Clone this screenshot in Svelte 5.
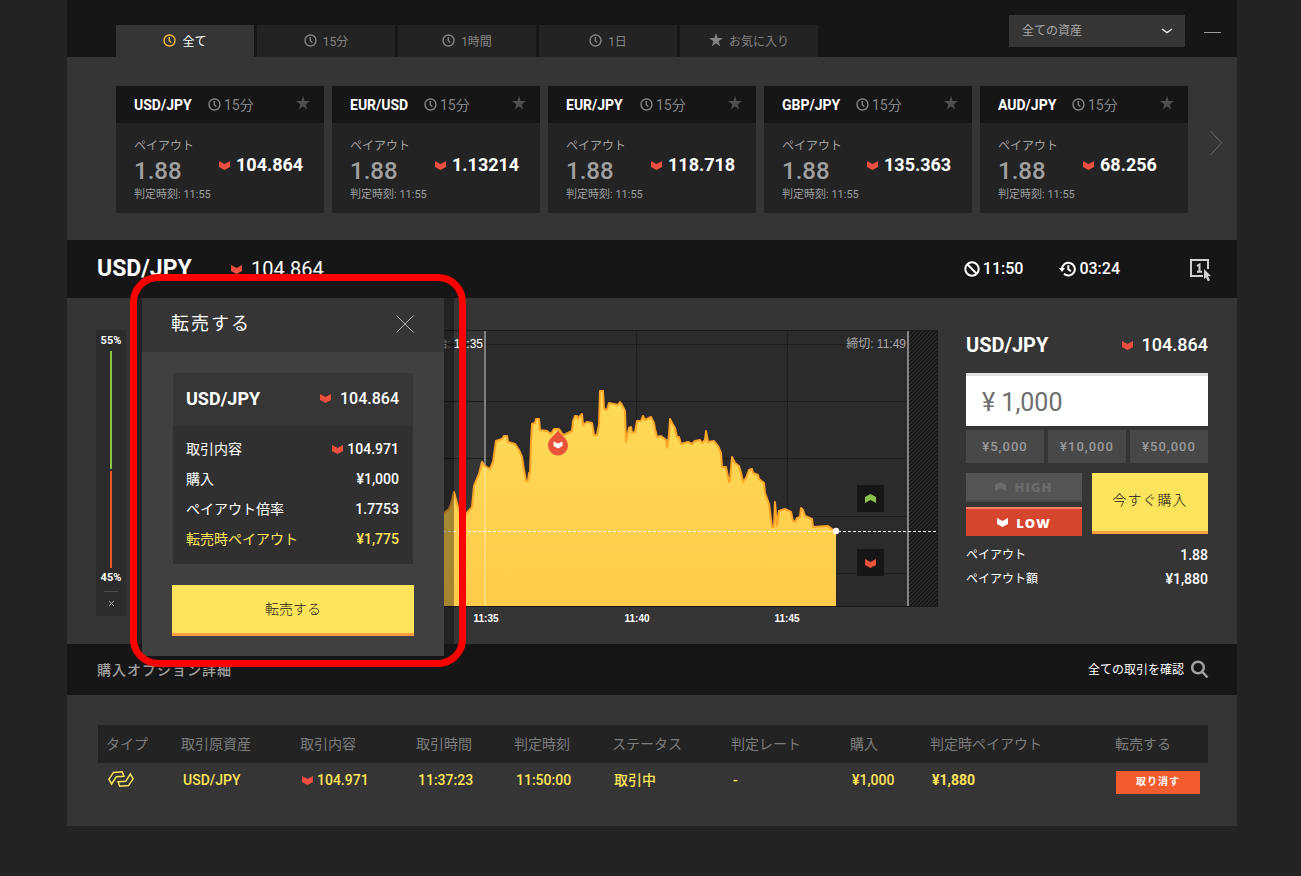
<script lang="ts">
    const tabs = [
        { label: "全て", icon: "clock" },
        { label: "15分", icon: "clock" },
        { label: "1時間", icon: "clock" },
        { label: "1日", icon: "clock" },
        { label: "お気に入り", icon: "star" },
    ];
    let activeTab = $state(0);

    const assets = [
        { pair: "USD/JPY", rate: "104.864" },
        { pair: "EUR/USD", rate: "1.13214" },
        { pair: "EUR/JPY", rate: "118.718" },
        { pair: "GBP/JPY", rate: "135.363" },
        { pair: "AUD/JPY", rate: "68.256" },
    ];

    const amounts = ["¥5,000", "¥10,000", "¥50,000"];
    let amount = $state("¥ 1,000");

    const columns = [
        { label: "タイプ", width: 75 },
        { label: "取引原資産", width: 119 },
        { label: "取引内容", width: 116 },
        { label: "取引時間", width: 98 },
        { label: "判定時刻", width: 98 },
        { label: "ステータス", width: 119 },
        { label: "判定レート", width: 119 },
        { label: "購入", width: 80 },
        { label: "判定時ペイアウト", width: 185 },
        { label: "転売する", width: 101 },
    ];

    // Rate history in chart units (800 x 300), oldest tick first.
    const ticks =
        "12,230 60,222 120,226 180,205 250,196 306,183 311,179 313,174 316,162 320,177 323,185 328,184 334,177 336,156 341,144 " +
        "344,132 347,136 352,139 355,132 358,111 364,109 366,106 369,106 370,112 377,114 381,120 " +
        "384,127 386,140 388,151 390,151 391,143 392,144 393,113 394,94 397,93 398,89 401,89 " +
        "402,100 409,101 413,104 416,99 421,99 425,105 428,104 434,101 435,91 437,86 439,86 " +
        "440,89 442,86 444,84 445,95 449,92 454,93 456,105 459,105 461,95 462,61 465,61 466,79 " +
        "469,80 471,73 480,75 482,72 484,75 487,81 488,112 491,98 493,97 494,103 497,102 499,91 " +
        "503,91 505,86 507,90 513,87 516,93 517,99 519,107 523,106 528,110 529,118 531,105 532,89 " +
        "534,93 537,98 539,107 541,107 543,114 550,112 554,114 557,111 562,110 564,113 567,110 568,101 " +
        "570,112 576,111 580,116 583,123 584,137 588,137 591,152 592,151 594,127 597,133 601,136 " +
        "603,143 605,152 608,148 611,140 614,139 615,143 620,145 621,149 626,153 627,163 631,174 " +
        "634,197 636,197 637,172 639,196 641,181 647,179 653,182 655,191 657,192 659,188 662,187 " +
        "663,178 665,180 667,186 674,189 675,197 690,196 695,200 698,201";
</script>

{#snippet clock()}
    <svg class="clock" width="13" height="13" viewBox="0 0 13 13" aria-hidden="true">
        <circle cx="6.5" cy="6.5" r="5.5" />
        <path d="M6.3 3v3.8l2 1.8" />
    </svg>
{/snippet}

{#snippet star()}
    <svg class="star" width="14" height="14" viewBox="0 0 14 14" aria-hidden="true">
        <path d="M7 0l1.6 5H14L9.6 8.2 11.3 13.5 7 10.3 2.7 13.5 4.4 8.2 0 5h5.4z" />
    </svg>
{/snippet}

{#snippet low()}
    <svg class="low" width="11" height="9" viewBox="0 0 11 9" aria-hidden="true">
        <path d="M0 0l5.5 3L11 0v6L5.5 9 0 6z" />
    </svg>
{/snippet}

<main>
    <header class="topbar">
        <nav class="tabs">
            {#each tabs as tab, i}
                <button class="tab" class:active={i === activeTab} onclick={() => (activeTab = i)}>
                    {#if tab.icon === "star"}{@render star()}{:else}{@render clock()}{/if}
                    <span>{tab.label}</span>
                </button>
            {/each}
        </nav>
        <div class="select">
            <select aria-label="全ての資産">
                <option>全ての資産</option>
            </select>
            <svg width="12" height="6" viewBox="0 0 12 6" aria-hidden="true">
                <path d="M1 1l5 3.6L11 1" />
            </svg>
        </div>
        <button class="collapse" aria-label="−"></button>
    </header>

    <section class="assets">
        <div class="cards">
            {#each assets as asset}
                <article class="card">
                    <div class="card-head">
                        <strong>{asset.pair}</strong>
                        {@render clock()}
                        <span>15分</span>
                        {@render star()}
                    </div>
                    <div class="card-body">
                        <div>
                            <div class="payout-label">ペイアウト</div>
                            <div class="payout">1.88</div>
                            <div class="expiry">判定時刻: 11:55</div>
                        </div>
                        <div class="rate">{@render low()}{asset.rate}</div>
                    </div>
                </article>
            {/each}
        </div>
        <button class="next" aria-label="›">
            <svg width="14" height="26" viewBox="0 0 14 26" aria-hidden="true">
                <path d="M1.5 1l11 12-11 12" />
            </svg>
        </button>
    </section>

    <section class="instrument">
        <h1>USD/JPY</h1>
        <div class="current">{@render low()}104.864</div>
        <div class="time">
            <svg width="16" height="16" viewBox="0 0 16 16" aria-hidden="true">
                <circle cx="8" cy="8" r="6.7" />
                <path d="M3.3 3.3l9.4 9.4" />
            </svg>
            11:50
        </div>
        <div class="time">
            <svg width="17" height="16" viewBox="0 0 17 16" aria-hidden="true">
                <path d="M3 8a6.4 6.4 0 1 1 2 4.8M9.3 4.2v4l2.6 2" />
                <path class="solid" d="M0 7h6L3 11z" />
            </svg>
            03:24
        </div>
        <button class="oneclick" aria-label="1">
            <svg width="22" height="24" viewBox="0 0 22 24" aria-hidden="true">
                <path class="frame" d="M18 11V2H1v16h12" />
                <path class="one" d="M7 8l2.5-1.5V14M7 13.7h5" />
                <path class="pointer" d="M14 11l7 7-3 .3 2 4-2.2 1-1.8-4-2 2z" />
            </svg>
        </button>
    </section>

    <section class="trade">
        <aside class="gauge">
            <span>55%</span>
            <i class="up"></i>
            <i class="down"></i>
            <span>45%</span>
            <button aria-label="×">
                <svg width="7" height="7" viewBox="0 0 7 7" aria-hidden="true">
                    <path d="M1 1l5 5M6 1L1 6" />
                </svg>
            </button>
        </aside>

        <svg class="chart" viewBox="0 0 800 300">
            <defs>
                <linearGradient id="area" x1="0" y1="0" x2="0" y2="1">
                    <stop offset="0" stop-color="#fedb58" />
                    <stop offset="1" stop-color="#fecb4a" />
                </linearGradient>
                <pattern id="hatch" width="4" height="4" patternUnits="userSpaceOnUse">
                    <rect width="4" height="4" fill="#303030" />
                    <path d="M-1 1l2-2M0 4l4-4M3 5l2-2" stroke="#141414" stroke-width="1.6" />
                </pattern>
            </defs>
            <rect x="10" width="337" height="276" fill="#363636" />
            <rect x="347" width="453" height="276" fill="#2b2b2b" />
            <rect x="771" width="29" height="276" fill="url(#hatch)" />
            <path class="grid" d="M10 14.5h760M10 71.5h760M10 128.5h760M10 186.5h760M10 243.5h760M498.5 0v276M649.5 0v276" />
            <path class="edge" d="M10 .5h790M10 276.5h790M799.5 0v276" />
            <path d="M347 1v275" stroke="#7f7f7f" stroke-width="2" />
            <polygon points={`12,276 ${ticks} 698,276`} fill="url(#area)" />
            <polyline points={ticks} fill="none" stroke="#ffa629" stroke-width="2" stroke-linejoin="round" />
            <path d="M347 137v139" stroke="#fff" stroke-opacity=".25" stroke-width="2" />
            <path d="M770 1v275" stroke="#858585" stroke-width="2" />
            <path d="M10 201.5h790" stroke="#fff" stroke-dasharray="3 2" />
            <circle cx="698" cy="201" r="3.2" fill="#fff" />

            <text class="mark" x="345" y="18" text-anchor="end">開始: <tspan class="now">11:35</tspan></text>
            <text class="mark" x="768" y="18" text-anchor="end">締切: 11:49</text>

            <path d="M420 100c2 5 10 8 10 15.5a10 10 0 0 1-20 0c0-7.5 8-10.5 10-15.5z" fill="#e95338" />
            <path d="M415.5 111.5l4.5 2 4.5-2v4.5l-4.5 2.5-4.5-2.5z" fill="#fff" />

            <rect x="719" y="155" width="27" height="27" fill="#161616" />
            <path d="M727 167l5.5-3 5.5 3v6l-5.5-3-5.5 3z" fill="#8bc34a" />
            <rect x="719" y="219" width="27" height="27" fill="#161616" />
            <path d="M727 229l5.5 3 5.5-3v6l-5.5 3-5.5-3z" fill="#f0533c" />

            <g class="axis" text-anchor="middle">
                <text x="348" y="292">11:35</text>
                <text x="499" y="292">11:40</text>
                <text x="649" y="292">11:45</text>
            </g>
        </svg>

        <form class="order" onsubmit={(e) => e.preventDefault()}>
            <div class="order-head">
                <h2>USD/JPY</h2>
                <span class="rate">{@render low()}104.864</span>
            </div>
            <input type="text" aria-label="購入" bind:value={amount} />
            <div class="amounts">
                {#each amounts as value}
                    <button type="button" onclick={() => (amount = value.replace("¥", "¥ "))}>{value}</button>
                {/each}
            </div>
            <div class="actions">
                <div class="direction">
                    <button type="button" class="high-btn">
                        <svg width="11" height="9" viewBox="0 0 11 9" aria-hidden="true">
                            <path d="M0 3l5.5-3L11 3v6L5.5 6 0 9z" />
                        </svg>
                        HIGH
                    </button>
                    <button type="button" class="low-btn">{@render low()} LOW</button>
                </div>
                <button class="buy">今すぐ購入</button>
            </div>
            <dl>
                <div><dt>ペイアウト</dt><dd>1.88</dd></div>
                <div><dt>ペイアウト額</dt><dd>¥1,880</dd></div>
            </dl>
        </form>

        <div class="dim"></div>
        <div class="modal" role="dialog" aria-labelledby="resell-title">
            <div class="modal-head">
                <h2 id="resell-title">転売する</h2>
                <button aria-label="×">
                    <svg width="18" height="18" viewBox="0 0 18 18" aria-hidden="true">
                        <path d="M.5.5l17 17M17.5.5l-17 17" />
                    </svg>
                </button>
            </div>
            <div class="modal-body">
                <div class="ticket">
                    <div class="ticket-head">
                        <h3>USD/JPY</h3>
                        <span class="rate">{@render low()}104.864</span>
                    </div>
                    <dl>
                        <div><dt>取引内容</dt><dd>{@render low()}104.971</dd></div>
                        <div><dt>購入</dt><dd>¥1,000</dd></div>
                        <div><dt>ペイアウト倍率</dt><dd>1.7753</dd></div>
                        <div class="accent"><dt>転売時ペイアウト</dt><dd>¥1,775</dd></div>
                    </dl>
                </div>
                <button class="sell">転売する</button>
            </div>
        </div>
        <div class="highlight"></div>
    </section>

    <section class="history-head">
        <h2>購入オプション詳細</h2>
        <a href="#history">
            全ての取引を確認
            <svg width="18" height="19" viewBox="0 0 18 19" aria-hidden="true">
                <circle cx="7" cy="7.5" r="5.8" />
                <path d="M11.5 12l5 5.5" />
            </svg>
        </a>
    </section>

    <section class="history" id="history">
        <table>
            <colgroup>
                {#each columns as column}
                    <col style={`width:${column.width}px`} />
                {/each}
            </colgroup>
            <thead>
                <tr>
                    {#each columns as column}<th>{column.label}</th>{/each}
                </tr>
            </thead>
            <tbody>
                <tr>
                    <td>
                        <svg class="type" width="26" height="16" viewBox="0 0 26 16" aria-hidden="true">
                            <path d="M3.7 13L.9 8.2 5.5 1.4l8.8-.6 1.6 4.4-7.6.5z" />
                            <path d="M22.3 3l2.8 4.800-4.600 6.800-8.800.6-1.600-4.400 7.600-.5z" />
                        </svg>
                    </td>
                    <td>USD/JPY</td>
                    <td>{@render low()}104.971</td>
                    <td>11:37:23</td>
                    <td>11:50:00</td>
                    <td>取引中</td>
                    <td>-</td>
                    <td>¥1,000</td>
                    <td><b>¥1,880</b></td>
                    <td><button class="cancel">取り消す</button></td>
                </tr>
            </tbody>
        </table>
    </section>
</main>

<style>
    :global(body) {
        background: #232323;
    }
    main {
        margin: 0 64px 50px 67px;
        background: #353535;
        color: #fff;
        font-family: Roboto, "Noto Sans CJK JP", sans-serif;
        font-size: 14px;
        line-height: 20px;
    }
    button,
    input,
    select {
        font: inherit;
        color: inherit;
        border: 0;
        border-radius: 0;
        padding: 0;
        margin: 0;
        background: none;
        box-sizing: border-box;
    }
    button {
        cursor: pointer;
    }
    h1,
    h2,
    h3,
    dl,
    dd {
        margin: 0;
    }
    svg {
        flex: none;
        fill: none;
    }
    .clock {
        stroke: currentColor;
        stroke-width: 1.4;
    }
    .star {
        fill: currentColor;
    }
    .low {
        fill: #f04e3e;
    }

    .topbar {
        display: flex;
        align-items: flex-end;
        height: 57px;
        padding: 0 16px 0 49px;
        background: #161616;
    }
    .tabs {
        display: flex;
        gap: 3px;
        flex: 1;
    }
    .tab {
        display: flex;
        align-items: center;
        justify-content: center;
        gap: 6px;
        width: 138px;
        height: 32px;
        background: #232323;
        color: #848484;
        font-size: 12px;
    }
    .tab span {
        padding-top: 2px;
    }
    .tab svg {
        margin-bottom: 2px;
    }
    .tab.active {
        background: #353535;
        color: #fff;
    }
    .tab.active .clock {
        stroke: #f5bd41;
    }
    .select {
        display: flex;
        align-items: center;
        align-self: flex-start;
        position: relative;
        width: 176px;
        height: 32px;
        margin-top: 15px;
        background: #353535;
        color: #a8a8a8;
        font-size: 12px;
    }
    .select select {
        appearance: none;
        width: 100%;
        height: 100%;
        padding: 0 13px;
    }
    .select svg {
        position: absolute;
        right: 12px;
        stroke: #e8e8e8;
        stroke-width: 1.5;
        pointer-events: none;
    }
    .collapse {
        align-self: center;
        width: 17px;
        height: 9px;
        margin-left: 19px;
        border-bottom: 1px solid #9a9a9a;
    }

    .assets {
        display: flex;
        align-items: center;
        padding: 29px 14px 27px 49px;
    }
    .cards {
        display: flex;
        flex: 1;
        gap: 8px;
    }
    .card {
        flex: 1;
        background: #232323;
    }
    .card-head {
        display: flex;
        align-items: center;
        height: 37px;
        padding: 0 14px 0 18px;
        background: #161616;
        color: #848484;
    }
    .card-head strong {
        color: #fff;
        font-weight: 700;
        flex: 0 0 74px;
    }
    .card-head span {
        margin-left: 3px;
        flex: 1;
    }
    .card-head .star {
        margin-bottom: 3px;
        color: #505050;
    }
    .card-body {
        display: flex;
        align-items: flex-start;
        justify-content: space-between;
        height: 90px;
        padding: 13px 21px 0 18px;
        box-sizing: border-box;
        color: #a0a0a0;
    }
    .payout-label {
        font-size: 12px;
    }
    .payout {
        font-size: 24px;
        font-weight: 500;
        line-height: 30px;
    }
    .expiry {
        font-size: 11px;
        line-height: 18px;
    }
    .rate {
        display: flex;
        align-items: center;
        color: #fff;
        font-size: 18px;
        font-weight: 500;
    }
    .card .rate {
        width: 84px;
        gap: 6px;
        padding-top: 19px;
        font-weight: 700;
    }
    .next {
        margin: 0 0 13px 21px;
    }
    .next svg {
        display: block;
        stroke: #6b6b6b;
    }

    .instrument {
        display: flex;
        align-items: center;
        height: 58px;
        padding: 0 25px 0 30px;
        background: #161616;
    }
    h1 {
        width: 134px;
        font-size: 23px;
        font-weight: 700;
    }
    .current {
        display: flex;
        align-items: center;
        gap: 9px;
        flex: 1;
        font-size: 20px;
    }
    .time {
        display: flex;
        align-items: center;
        gap: 3px;
        margin-right: 36px;
        font-size: 16px;
        font-weight: 500;
    }
    .time svg {
        stroke: #fff;
        stroke-width: 2;
    }
    .time .solid {
        fill: #fff;
        stroke: none;
    }
    .oneclick {
        margin: 2px 0 0 34px;
    }
    .oneclick svg {
        display: block;
    }
    .frame,
    .one {
        stroke: #cfcfcf;
        stroke-width: 2;
    }
    .pointer {
        fill: #cfcfcf;
    }

    .trade {
        position: relative;
        display: flex;
        align-items: flex-start;
        padding: 32px 29px 14px;
    }
    .gauge {
        display: flex;
        flex-direction: column;
        align-items: center;
        width: 30px;
        height: 286px;
        padding-top: 1px;
        box-sizing: border-box;
        margin-right: 12px;
        background: #2c2c2c;
        font-size: 11px;
        font-weight: 700;
    }
    .gauge i {
        width: 2px;
    }
    .gauge .up {
        flex: 55;
        margin-bottom: 2px;
        background: #8bc34a;
    }
    .gauge .down {
        flex: 45;
        background: #f0592b;
    }
    .gauge span + button {
        display: flex;
        align-items: center;
        justify-content: center;
        width: 14px;
        height: 24px;
        margin: 3px 0 1px;
        border-top: 1px solid #4c4c4c;
    }
    .gauge svg {
        stroke: #a8a8a8;
    }
    .chart {
        display: block;
        flex: 1;
        min-width: 0;
    }
    .grid {
        stroke: #1e1e1e;
    }
    .edge {
        stroke: #1a1a1a;
    }
    .mark {
        fill: #a8a8a8;
        font-size: 12px;
        font-family: "Liberation Sans", "Noto Sans CJK JP", sans-serif;
    }
    .now {
        fill: #fff;
    }
    .axis {
        fill: #fff;
        font: bold 10px "Liberation Sans", Arial, sans-serif;
    }

    .order {
        width: 242px;
        margin-left: 28px;
    }
    .order-head,
    .ticket-head {
        display: flex;
        align-items: center;
        justify-content: space-between;
    }
    .order-head {
        height: 30px;
        margin-bottom: 13px;
    }
    .order h2 {
        font-size: 20px;
        font-weight: 700;
    }
    .order .rate {
        gap: 9px;
    }
    .order input {
        display: block;
        width: 100%;
        height: 53px;
        padding: 3px 16px 0;
        border-top: 3px solid #e3e3e3;
        background: #fff;
        color: #6e6e6e;
        font-size: 25px;
    }
    .amounts {
        display: flex;
        gap: 4px;
        margin: 4px 0 10px;
    }
    .amounts button {
        flex: 1;
        height: 33px;
        background: #484848;
        color: #9a9a9a;
        font-size: 13px;
        font-weight: 500;
        letter-spacing: 1px;
    }
    .actions {
        display: flex;
        gap: 10px;
        margin-bottom: 7px;
    }
    .direction {
        flex: 1;
    }
    .direction button {
        display: flex;
        align-items: center;
        justify-content: center;
        gap: 8px;
        width: 100%;
        height: 29px;
        font-family: "Open Sans", sans-serif;
        font-size: 13px;
        font-weight: 800;
        letter-spacing: 1px;
    }
    .direction .high-btn {
        margin-bottom: 5px;
        border-bottom: 2px solid #4a4a4a;
        background: #545454;
        color: #6b6b6b;
    }
    .high-btn svg {
        fill: #6b6b6b;
    }
    .direction .low-btn {
        border-top: 2px solid #ff8360;
        background: #d6452e;
    }
    .low-btn .low {
        fill: #fff;
    }
    .buy,
    .sell {
        border-bottom: 3px solid #ff9f40;
        background: #fce45c;
        color: #161616;
        font-weight: 300;
    }
    .buy {
        flex: 1;
        height: 61px;
        padding-bottom: 5px;
        letter-spacing: 1px;
    }
    dl > div {
        display: flex;
        justify-content: space-between;
        align-items: center;
    }
    dd {
        display: flex;
        align-items: center;
        gap: 4px;
        font-size: 14px;
        font-weight: 500;
    }
    .order dl {
        font-size: 12px;
    }
    .order dl > div {
        height: 24px;
    }

    .dim {
        position: absolute;
        top: 0;
        bottom: 0;
        left: 65px;
        width: 322px;
        background: rgba(0, 0, 0, 0.35);
    }
    .modal {
        position: absolute;
        z-index: 1;
        top: 0;
        left: 75px;
        width: 302px;
        background: #404040;
    }
    .modal-head {
        display: flex;
        align-items: center;
        justify-content: space-between;
        height: 52px;
        padding: 0 30px 2px 29px;
        background: #353535;
    }
    .modal-head h2 {
        font-size: 18px;
        font-weight: 400;
        letter-spacing: 2px;
    }
    .modal-head svg {
        display: block;
        stroke: #b0b0b0;
    }
    .modal-body {
        padding: 21px 30px 20px;
    }
    .ticket {
        margin: 0 1px 21px;
        background: #303030;
    }
    .ticket-head {
        height: 51px;
        padding: 0 14px 2px 13px;
        background: #363636;
    }
    .ticket h3 {
        font-size: 18px;
        font-weight: 700;
    }
    .ticket .rate {
        gap: 9px;
        font-size: 16px;
    }
    .ticket dl {
        padding: 8px 14px 10px 13px;
    }
    .ticket dl > div {
        height: 30px;
    }
    .accent {
        color: #fce45c;
    }
    .sell {
        width: 100%;
        height: 51px;
    }
    .highlight {
        position: absolute;
        z-index: 2;
        top: -24px;
        left: 63px;
        width: 336px;
        height: 393px;
        box-sizing: border-box;
        border: 7px solid #f00;
        border-radius: 28px;
        pointer-events: none;
    }

    .history-head {
        display: flex;
        align-items: center;
        justify-content: space-between;
        height: 51px;
        padding: 0 28px 0 30px;
        background: #161616;
    }
    .history-head h2 {
        color: #a0a0a0;
        font-size: 14px;
        font-weight: 500;
        letter-spacing: 1px;
    }
    .history-head a {
        display: flex;
        align-items: center;
        gap: 7px;
        color: #fff;
        font-size: 12px;
        text-decoration: none;
    }
    .history-head svg {
        stroke: #a0a0a0;
        stroke-width: 2.5;
    }

    .history {
        padding: 30px 29px 27px 31px;
    }
    table {
        width: 100%;
        table-layout: fixed;
        border-collapse: collapse;
    }
    th {
        height: 38px;
        padding: 0 0 0 8px;
        background: #232323;
        color: #7c7c7c;
        font-weight: 400;
        text-align: left;
    }
    td {
        height: 34px;
        padding: 0 0 2px 10px;
        color: #fce45c;
        font-weight: 500;
    }
    td .low {
        margin-right: 4px;
    }
    td:last-child {
        padding: 2px 0 0 9px;
    }
    .type {
        display: block;
        margin-bottom: 3px;
        stroke: #fce45c;
        stroke-width: 1.5;
    }
    .cancel {
        display: block;
        width: 84px;
        height: 23px;
        background: #f25c2e;
        color: #fff;
        font-size: 10px;
        font-weight: 700;
        letter-spacing: 1px;
    }
</style>
